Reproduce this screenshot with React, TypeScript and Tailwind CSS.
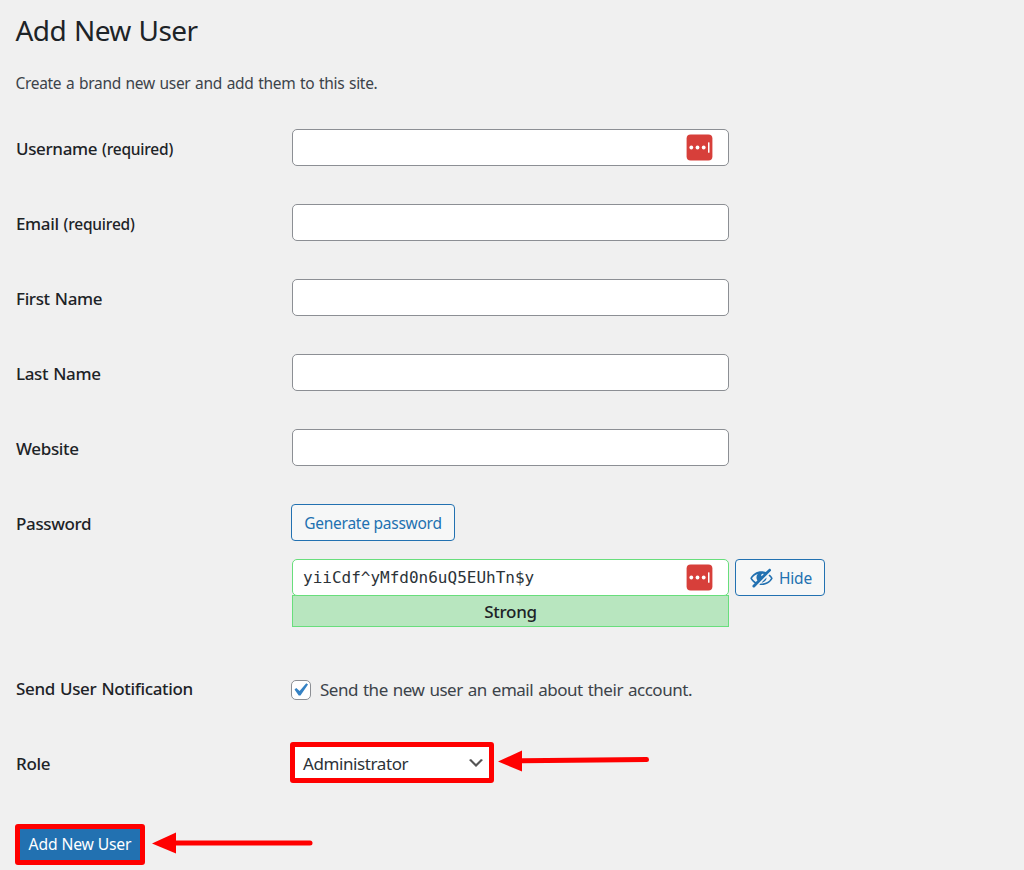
import type { ReactNode } from 'react';

const inputClass = 'w-[437px] h-[37px] rounded-[5px] border border-[#8c8f94] bg-white px-2.5 outline-none';

function PasswordBadge({ className }: { className: string }) {
  return (
    <svg className={`absolute ${className}`} width="27" height="27" viewBox="0 0 27 27">
      <rect x=".6" y=".6" width="25.8" height="25.8" rx="4" fill="#d73f3a" />
      <circle cx="5.3" cy="13.5" r="1.9" fill="#fff" />
      <circle cx="11.5" cy="13.5" r="1.9" fill="#fff" />
      <circle cx="17.7" cy="13.5" r="1.9" fill="#fff" />
      <rect x="22" y="8.3" width="1.5" height="10.4" rx=".5" fill="#fff" />
    </svg>
  );
}

function Arrow({ className, end }: { className: string; end: string }) {
  return (
    <svg className={className} width="162" height="24" viewBox="0 0 162 24">
      <path d="M0 12.5L24 1.5V22.5z" fill="#f00" />
      <path d={end} stroke="#f00" strokeWidth="5" strokeLinecap="round" />
    </svg>
  );
}

function Row({ label, required, className = 'h-[75px]', children }: {
  label: string;
  required?: boolean;
  className?: string;
  children: ReactNode;
}) {
  return (
    <div className={`flex items-start ${className}`}>
      <div className="w-[276px] shrink-0 pt-2 leading-6 text-[17px] font-medium tracking-[-0.35px] [word-spacing:1px] text-[#1d2327]">
        {label}
        {required && <span className="text-[15.5px] tracking-[-0.2px]"> (required)</span>}
      </div>
      {children}
    </div>
  );
}

function App() {
  const fields = [
    { label: 'Username', required: true, badge: true },
    { label: 'Email', required: true },
    { label: 'First Name' },
    { label: 'Last Name' },
    { label: 'Website' }
  ];

  return (
    <div className="h-[870px] overflow-hidden bg-[#f0f0f0] pl-[15.5px] font-['Noto_Sans','Open_Sans',sans-serif] text-[#3c434a]">
      <h1 className="pt-3 text-[28px] leading-9 tracking-[-0.55px] [word-spacing:1px] text-[#1d2327]">Add New User</h1>
      <p className="mt-[23px] text-[15.5px] leading-6 tracking-[-0.32px] [word-spacing:1px]">
        <span>Create a brand new user and add them to this site.</span>
      </p>

      <form className="mt-[34px] pl-[0.5px]">
        {fields.map((field) => (
          <Row key={field.label} label={field.label} required={field.required}>
            <div className="relative">
              <input className={`block ${inputClass}`} />
              {field.badge && <PasswordBadge className="right-4 top-[5px]" />}
            </div>
          </Row>
        ))}

        <Row label="Password" className="h-[165px]">
          <div>
            <button type="button" className="-ml-px block h-[37px] w-[164px] rounded-[4px] border border-[#2271b1] bg-[#f6f7f7] pt-0.5 text-[15.5px] tracking-[-0.25px] text-[#2271b1]">
              <span>Generate password</span>
            </button>
            <div className="mt-[18px] flex items-start">
              <div className="w-[437px]">
                <div className="relative flex h-[37px] items-center rounded-[5px] border border-[#68de7c] bg-white pl-2.5 font-['DejaVu_Sans_Mono',monospace] text-[16px] text-[#2c3338]">
                  <span>yiiCdf^yMfd0n6uQ5EUhTn$y</span>
                  <PasswordBadge className="right-[15px] top-1" />
                </div>
                <div className="-mt-px h-8 border border-[#68de7c] bg-[#b8e6bf] text-center text-[17px] font-medium leading-[31px] tracking-[-0.3px] text-[#1d2327]">
                  <span>Strong</span>
                </div>
              </div>
              <button type="button" className="ml-1.5 flex h-[37px] w-[90px] items-center rounded-[4px] border border-[#2271b1] bg-[#f6f7f7] pl-[13px] text-[15.5px] text-[#2271b1]">
                <svg width="25" height="25" viewBox="0 0 20 20" fill="currentColor">
                  <path d="M17.2 3.3l.16.17c.39.39.39 1.02 0 1.41L4.55 17.7c-.39.39-1.03.39-1.41 0l-.17-.17c-.39-.39-.39-1.02 0-1.41l1.59-1.6c-1.57-1-2.76-2.3-3.56-3.93.81-1.65 2.03-2.98 3.64-3.99S8.04 5.09 10 5.09c1.2 0 2.33.21 3.4.6l2.38-2.39c.39-.39 1.03-.39 1.42 0zm-7.09 4.01c-.23.25-.34.54-.34.88 0 .31.12.58.31.81l1.8-1.79c-.13-.12-.28-.21-.45-.26-.11-.01-.28-.03-.49-.04-.33.03-.6.16-.83.4zM2.4 10.59c.69 1.23 1.71 2.25 3.05 3.05l1.28-1.28c-.51-.69-.77-1.47-.77-2.36 0-1.06.36-1.98 1.09-2.76-1.04.27-1.96.7-2.76 1.26-.8.58-1.43 1.27-1.89 2.09zm13.22-2.13l.96-.96c1.02.86 1.83 1.89 2.42 3.09-.81 1.65-2.03 2.98-3.64 3.99s-3.4 1.51-5.36 1.51c-.63 0-1.24-.07-1.83-.18l1.07-1.07c.25.02.5.05.76.05 1.63 0 3.13-.4 4.5-1.21s2.4-1.84 3.1-3.09c-.46-.82-1.09-1.51-1.89-2.09-.03-.01-.06-.03-.09-.04zm-5.58 5.58l4-4c-.01 1.1-.41 2.04-1.18 2.81-.78.78-1.72 1.18-2.82 1.19z" />
                </svg>
                <span className="ml-[5px] pt-0.5 tracking-[-0.2px]">Hide</span>
              </button>
            </div>
          </div>
        </Row>

        <Row label="Send User Notification">
          <label className="-ml-px flex items-start pt-[9px]">
            <span className="mt-0.5 flex size-5 items-center justify-center rounded-[5px] border border-[#8c8f94] bg-white">
              <svg className="-ml-0.5 shrink-0" width="26" height="26" viewBox="0 0 20 20" fill="#3582c4">
                <path d="M14.83 4.89l1.34.94-5.81 8.38H9.02L5.78 9.67l1.34-1.25 2.57 2.4z" />
              </svg>
            </span>
            <span className="ml-[9px] text-[17px] leading-6 tracking-[-0.47px] [word-spacing:1px]">Send the new user an email about their account.</span>
          </label>
        </Row>

        <Row label="Role" className="h-[80px]">
          <div className="-ml-[2px] -mt-[2px] flex items-start">
            <div className="flex h-[41px] w-[204px] items-center justify-between rounded-[3px] border-[5px] border-[#f00] bg-white pl-2 pr-[3px] text-[17px] tracking-[-0.4px] text-[#2c3338]">
              <span className="pt-0.5">Administrator</span>
              <svg width="20" height="20" viewBox="0 0 20 20" fill="#555">
                <path d="M5 6l5 5 5-5 2 1-7 7-7-7 2-1z" />
              </svg>
            </div>
            <Arrow className="ml-1 mt-[6.5px]" end="M24 11.8L148.5 10.5" />
          </div>
        </Row>

        <div className="-ml-px flex items-start">
          <button type="button" className="h-[41px] w-[130px] rounded-[3px] border-[5px] border-[#f00] bg-[#2271b1] text-[15.7px] tracking-[-0.15px] text-white">
            <span>Add New User</span>
          </button>
          <Arrow className="ml-[7px] mt-[6.5px]" end="M24 12H158" />
        </div>
      </form>
    </div>
  );
}

export default App;
